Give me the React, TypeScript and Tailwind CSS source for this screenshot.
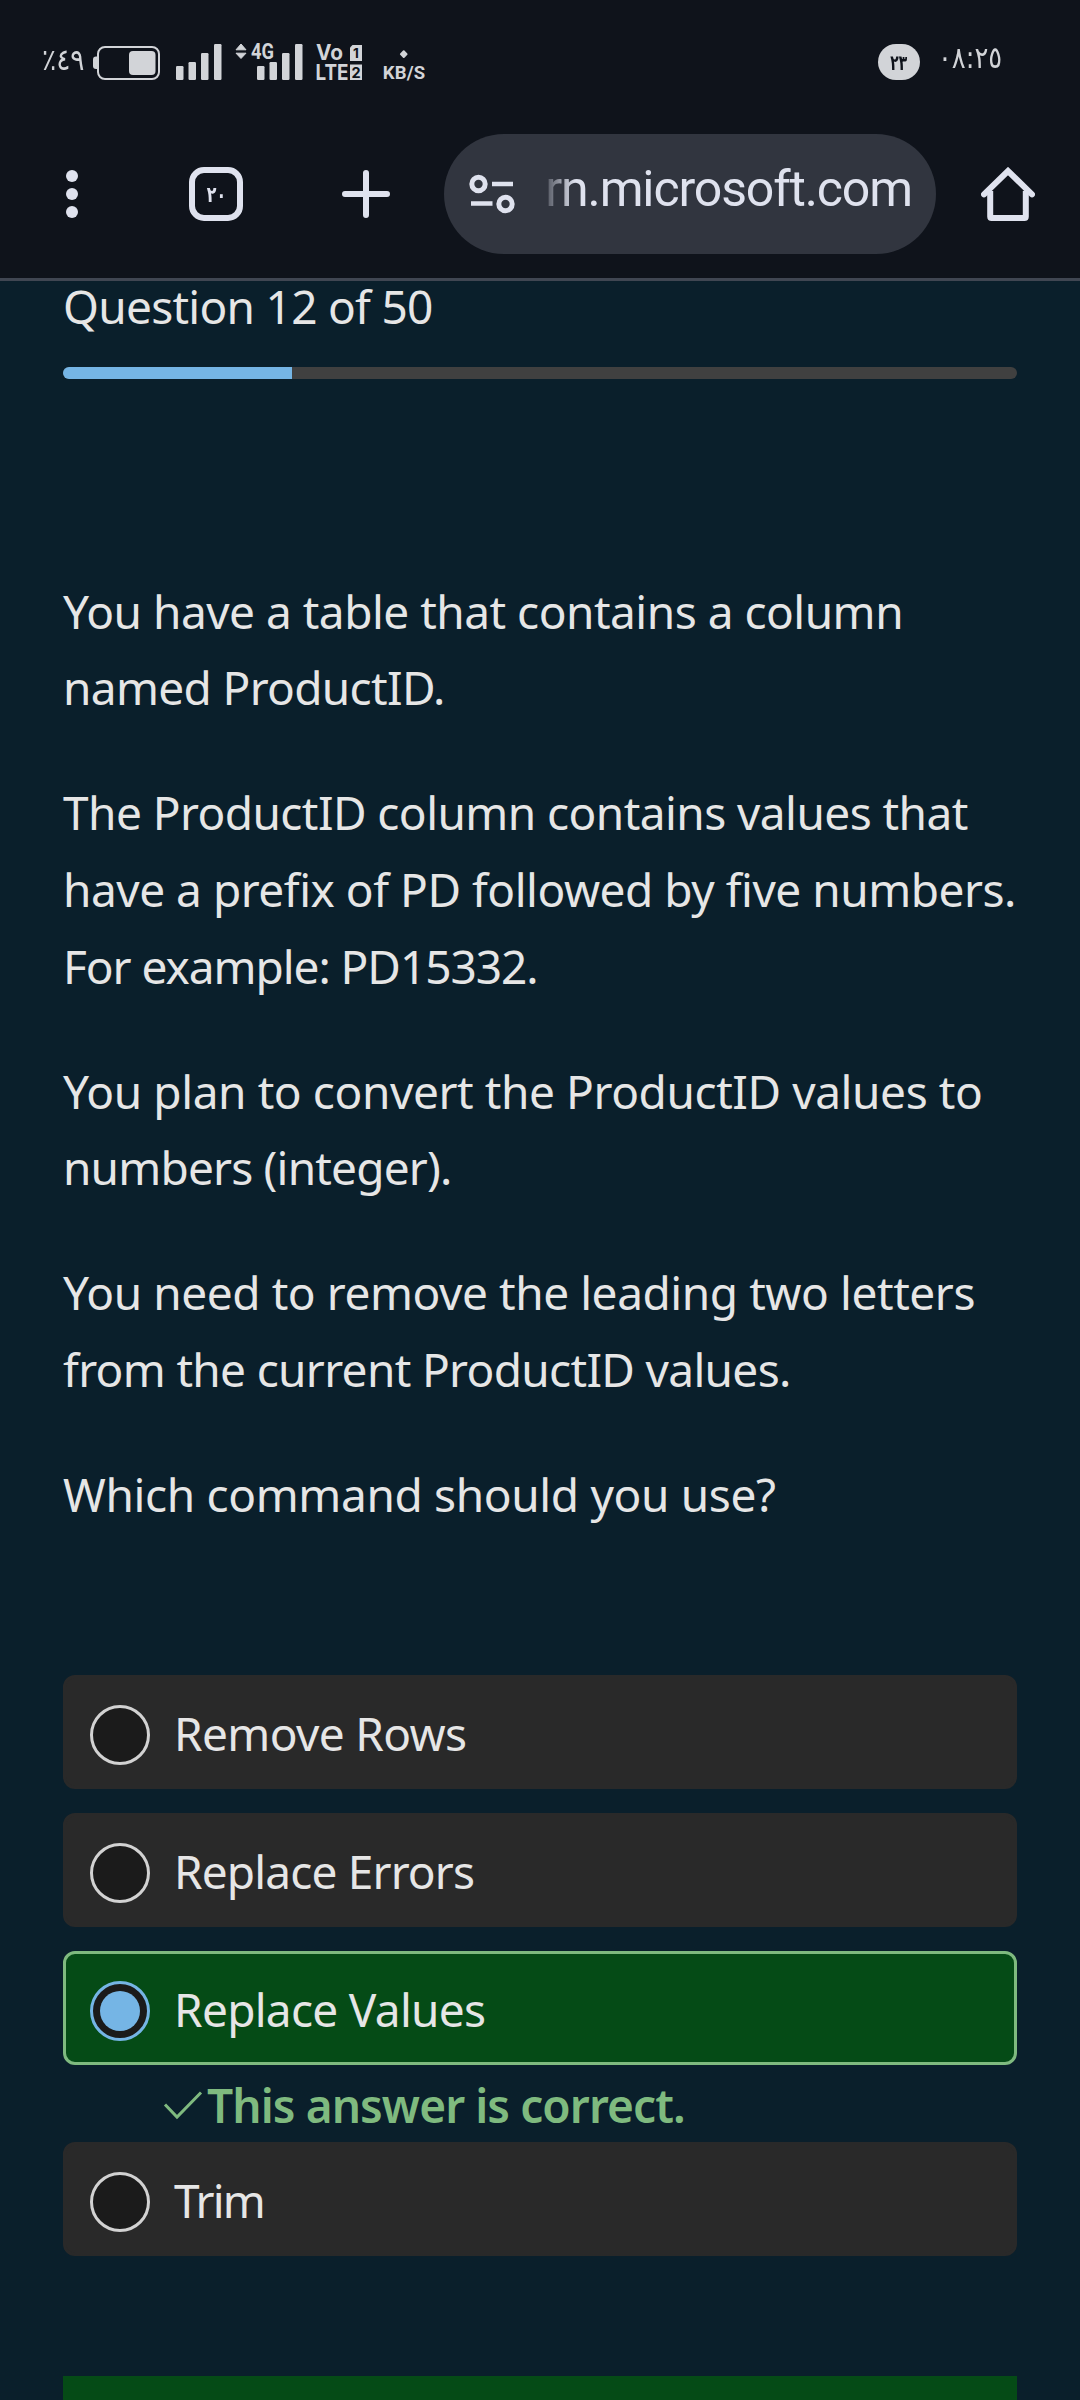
import React from "react";

const bars = (x: number) => (
  <g fill="#d2d4d8">
    <rect x={x} y="66" width="7.5" height="14" rx="1.2" />
    <rect x={x + 12.5} y="62" width="7.5" height="18" rx="1.2" />
    <rect x={x + 25} y="53" width="7.5" height="27" rx="1.2" />
    <rect x={x + 38} y="44" width="7.5" height="36" rx="1.2" />
  </g>
);

function StatusBar() {
  return (
    <div className="flex h-[134px] items-start text-[#d2d4d8]">
      <div className="ml-[42px] mt-[42px] w-[51px] whitespace-nowrap font-['DejaVu_Sans',sans-serif] text-[30px] leading-[36px]">
        <span className="inline-block origin-left scale-x-[0.880]">٪٤٩</span>
      </div>
      <svg className="mt-[40px] h-[48px] w-[68px]" viewBox="93 40 68 48">
        <path d="M98 56.500h-2a3 3 0 0 0-3 3v6.500a3 3 0 0 0 3 3h2z" fill="#d2d4d8" />
        <rect x="98" y="47" width="61" height="32" rx="7" fill="none" stroke="#d2d4d8" strokeWidth="2" />
        <rect x="129" y="51" width="26.500" height="24" rx="4" fill="#d2d4d8" />
      </svg>
      <svg className="ml-[15px] mt-[40px] h-[48px] w-[46px]" viewBox="176 40 46 48">
        {bars(176)}
      </svg>
      <svg className="ml-[12px] mt-[40px] h-[48px] w-[70px]" viewBox="234 40 70 48">
        <path d="M236 49.800L241 44l5 5.800zM236 53.200h10L241 58.500z" fill="#d2d4d8" stroke="#d2d4d8" strokeWidth="1" />
        {bars(257)}
        <text x="251" y="58.500" fontFamily="Roboto, sans-serif" fontWeight="700" fontSize="21.500" textLength="23" lengthAdjust="spacingAndGlyphs" fill="#d2d4d8" stroke="#0f131b" strokeWidth="3" paintOrder="stroke">4G</text>
      </svg>
      <svg className="ml-[12px] mt-[40px] h-[48px] w-[48px]" viewBox="316 40 48 48" fontFamily="Inter, sans-serif" fontWeight="700">
        <text x="316" y="60" fontSize="21.500" textLength="27" lengthAdjust="spacingAndGlyphs" fill="#d2d4d8">Vo</text>
        <text x="315.500" y="79.500" fontSize="21.500" textLength="33" lengthAdjust="spacingAndGlyphs" fill="#d2d4d8">LTE</text>
        <path d="M352.500 45H362v16h-12V47.500z" fill="#d2d4d8" />
        <rect x="350" y="64.500" width="12" height="15.500" fill="#d2d4d8" />
        <text x="356" y="58" fontSize="13.500" textAnchor="middle" fill="#0f131b">1</text>
        <text x="356" y="77.500" fontSize="14.500" textAnchor="middle" fill="#0f131b">2</text>
      </svg>
      <div className="ml-[17px] mt-[51px] flex w-[46px] flex-col items-center font-['Roboto',sans-serif] text-[18.500px] font-bold leading-[20px] tracking-[0.2px]">
        <span className="mb-[6px] h-[5.500px] w-[5.500px] rotate-45 rounded-[1px] bg-[#d2d4d8]" />
        KB/S
      </div>
      <div className="ml-auto mt-[44px] flex h-[36px] w-[42px] items-center justify-center rounded-full bg-[#d2d4d8] pt-[3px] font-['DejaVu_Sans',sans-serif] text-[21px] font-bold text-[#0f131b]">
        <span className="scale-x-[0.660]">٢٣</span>
      </div>
      <div className="ml-[18px] mr-[75px] mt-[40px] w-[67px] whitespace-nowrap font-['DejaVu_Sans',sans-serif] text-[30px] leading-[36px]">
        <span className="inline-block origin-left scale-x-[0.860]">٠٨:٢٥</span>
      </div>
    </div>
  );
}

function Toolbar() {
  return (
    <div className="flex h-[147px] items-start border-b-[3px] border-[#404652] text-[#dfe2ee]">
      <svg className="ml-[66px] mt-[36px] h-[48px] w-[12px]" viewBox="0 0 12 48" fill="currentColor">
        <circle cx="6" cy="6" r="6" />
        <circle cx="6" cy="24" r="6" />
        <circle cx="6" cy="42" r="6" />
      </svg>
      <div className="ml-[111px] mt-[33px] flex h-[54px] w-[54px] items-center justify-center rounded-[15px] border-[6px] border-[#dfe2ee] pt-[2px] font-['DejaVu_Sans',sans-serif] text-[22px] font-bold">
        <span className="scale-x-[0.720]">٢٠</span>
      </div>
      <svg className="ml-[99px] mt-[36px] h-[48px] w-[48px]" viewBox="0 0 48 48" stroke="currentColor" strokeWidth="6" strokeLinecap="round">
        <path d="M24 3v42M3 24h42" />
      </svg>
      <div className="ml-[54px] flex h-[120px] w-[492px] items-start rounded-full bg-[#31353f]">
        <svg className="ml-[25px] mt-[40px] h-[40px] w-[46px]" viewBox="469 174 46 40" fill="none" stroke="currentColor" strokeWidth="5">
          <circle cx="478.500" cy="184" r="6.700" />
          <circle cx="505.500" cy="204" r="6.700" />
          <path d="M492 184h21M471 203.500h21.500" strokeWidth="4.500" />
        </svg>
        <div className="ml-[24px] mt-[23px] flex w-[374px] justify-end overflow-hidden whitespace-nowrap font-['Roboto',sans-serif] text-[50px] leading-[64px] tracking-[-1.120px] [mask-image:linear-gradient(to_right,transparent,black_36px)]">
          <span className="mr-[1px]">rn.microsoft.com</span>
        </div>
      </div>
      <svg className="ml-[45px] mt-[33px] h-[54px] w-[54px]" viewBox="0 0 54 54" fill="none" stroke="currentColor" strokeWidth="6" strokeLinecap="round">
        <path d="M3 27.300L27 4l24 23.300" strokeLinejoin="miter" />
        <path d="M9.200 24v25.500q0 1.500 1.500 1.500h32.600q1.500 0 1.500-1.500V24" strokeLinecap="butt" />
      </svg>
    </div>
  );
}

function Radio({ checked = false }: { checked?: boolean }) {
  return (
    <span
      className={
        checked
          ? "flex h-[60px] w-[60px] items-center justify-center rounded-full border-[3px] border-[#75b5e5] bg-[#1b1b1b]"
          : "flex h-[60px] w-[60px] items-center justify-center rounded-full border-[3px] border-[#d2d2d2] bg-[#1b1b1b]"
      }
    >
      {checked && <span className="h-[40px] w-[40px] rounded-full bg-[#75b5e5]" />}
    </span>
  );
}

function Option({ checked = false, children }: { checked?: boolean; children: React.ReactNode }) {
  return (
    <label
      className={
        checked
          ? "flex h-[114px] items-center gap-[24px] rounded-[12px] border-[3px] border-[#7fba7f] bg-[#054b16] pl-[24px] pt-[6px]"
          : "flex h-[114px] items-center gap-[24px] rounded-[12px] border-[3px] border-[#292929] bg-[#292929] pl-[24px] pt-[6px]"
      }
    >
      <Radio checked={checked} />
      <span className="pb-[4px]">{children}</span>
    </label>
  );
}

export default function App() {
  return (
    <div className="flex h-[2400px] w-[1080px] flex-col overflow-hidden bg-[#0a1f2b] font-['Noto_Sans',sans-serif] text-[46px] leading-[76.800px] text-[#e6e6e6]">
      <header className="shrink-0 bg-[#0f131b]">
        <StatusBar />
        <Toolbar />
      </header>
      <main className="flex flex-col whitespace-nowrap px-[63px]">
        <div className="-mt-[13px] h-[77px] tracking-[-0.720px]">Question 12 of 50</div>
        <div className="mt-[22px] h-[12px] overflow-hidden rounded-[6px] bg-[#404040]">
          <div className="h-full w-[24%] bg-[#75b5e5]" />
        </div>
        <section className="mt-[193.700px] flex h-[987.300px] flex-col gap-[48px]">
          <p>
            <span className="block tracking-[-0.500px]">You have a table that contains a column</span>
            <span className="block tracking-[-0.661px]">named ProductID.</span>
          </p>
          <p>
            <span className="block tracking-[-0.560px]">The ProductID column contains values that</span>
            <span className="block tracking-[-0.479px]">have a prefix of PD followed by five numbers.</span>
            <span className="block tracking-[-1.050px]">For example: PD15332.</span>
          </p>
          <p>
            <span className="block tracking-[-0.408px]">You plan to convert the ProductID values to</span>
            <span className="block tracking-[-0.810px]">numbers (integer).</span>
          </p>
          <p>
            <span className="block tracking-[-0.430px]">You need to remove the leading two letters</span>
            <span className="block tracking-[-0.663px]">from the current ProductID values.</span>
          </p>
          <p className="tracking-[-0.353px]">Which command should you use?</p>
        </section>
        <div className="mt-[115px] flex flex-col gap-[24px]">
          <Option><span className="tracking-[-0.643px]">Remove Rows</span></Option>
          <Option><span className="tracking-[-0.845px]">Replace Errors</span></Option>
          <Option checked><span className="tracking-[-0.710px]">Replace Values</span></Option>
        </div>
        <div className="flex h-[77px] items-center pl-[99px] font-semibold tracking-[-0.907px] text-[#7fba7f]">
          <svg className="mt-[4px] h-[36px] w-[45px]" viewBox="162 2087 45 36" fill="none" stroke="currentColor" strokeWidth="3">
            <path d="M165 2104.500l12 12.500 24-24.500" />
          </svg>
          <span className="mt-[3px]">This answer is correct.</span>
        </div>
        <Option><span className="tracking-[-1.800px]">Trim</span></Option>
        <div className="mt-[120px] h-[24px] bg-[#054b16]" />
      </main>
    </div>
  );
}
